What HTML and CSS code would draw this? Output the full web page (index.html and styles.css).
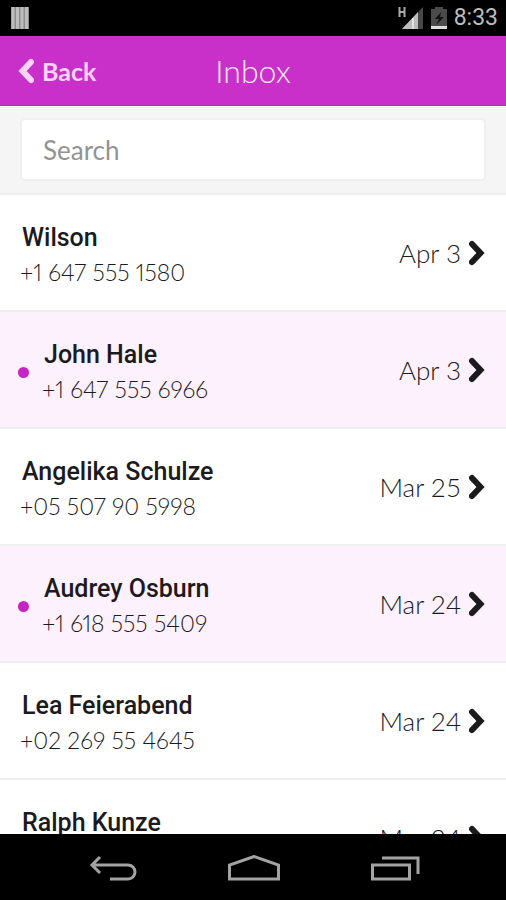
FILE: index.html
```html
<!DOCTYPE html>
<html lang="en">
<head>
<meta charset="utf-8">
<meta name="viewport" content="width=device-width, initial-scale=1">
<title>Inbox</title>
<link rel="stylesheet" href="styles.css">
</head>
<body>
<svg class="symbols" aria-hidden="true">
  <symbol id="chevron" viewBox="0 0 16 26"><path d="M3 4 11.500 13 3 22" fill="none" stroke="currentColor" stroke-width="6" stroke-linecap="round" stroke-linejoin="miter"/></symbol>
</svg>
<div class="screen">
  <div class="status">
    <svg class="status-bars" viewBox="0 0 18 22" aria-hidden="true"><rect width="18" height="22" fill="#8c8c8c"/><path d="M2 0v22M6.500 0v22M11 0v22M15.500 0v22" stroke="#bdbdbd" stroke-width="3"/></svg>
    <div class="status-right">
      <svg class="signal" viewBox="0 0 26 24" aria-hidden="true">
        <path d="M1.500 1v10M6.500 1v10M1.500 6h5" stroke="#aaa" stroke-width="2" fill="none"/>
        <path d="M4 23 25 1v22z" fill="#484848"/><path d="M4 23 20 6v17z" fill="#bdbdbd"/><path d="M15 12v11" stroke="#e2e2e2" stroke-width="2"/>
      </svg>
      <svg class="battery" viewBox="0 0 16 24" aria-hidden="true">
        <path d="M4 1h8v2h4v20H0V3h4z" fill="#4b4b4b"/><path d="M0 20h16v3H0z" fill="#ddd"/><path d="M10 6 4 13h4l-3 6 8-8H9z" fill="#111"/>
      </svg>
      <span class="clock">8:33</span>
    </div>
  </div>
  <header class="bar">
    <button class="back" type="button"><svg class="chevron chevron-left" aria-hidden="true"><use href="#chevron"/></svg>Back</button>
    <h1 class="title">Inbox</h1>
  </header>
  <form class="search"><input class="search-box" type="search" placeholder="Search" aria-label="Search"></form>
  <main class="list-area">
    <ul class="list">
      <li><a class="row" href="#wilson"><span class="who"><span class="name">Wilson</span><span class="number">+1 647 555 1580</span></span><span class="date">Apr 3</span><svg class="chevron" aria-hidden="true"><use href="#chevron"/></svg></a></li>
      <li><a class="row unread" href="#john"><span class="dot"></span><span class="who"><span class="name">John Hale</span><span class="number">+1 647 555 6966</span></span><span class="date">Apr 3</span><svg class="chevron" aria-hidden="true"><use href="#chevron"/></svg></a></li>
      <li><a class="row" href="#angelika"><span class="who"><span class="name">Angelika Schulze</span><span class="number">+05 507 90 5998</span></span><span class="date">Mar 25</span><svg class="chevron" aria-hidden="true"><use href="#chevron"/></svg></a></li>
      <li><a class="row unread" href="#audrey"><span class="dot"></span><span class="who"><span class="name">Audrey Osburn</span><span class="number">+1 618 555 5409</span></span><span class="date">Mar 24</span><svg class="chevron" aria-hidden="true"><use href="#chevron"/></svg></a></li>
      <li><a class="row" href="#lea"><span class="who"><span class="name">Lea Feierabend</span><span class="number">+02 269 55 4645</span></span><span class="date">Mar 24</span><svg class="chevron" aria-hidden="true"><use href="#chevron"/></svg></a></li>
      <li><a class="row" href="#ralph"><span class="who"><span class="name">Ralph Kunze</span><span class="number">&nbsp;</span></span><span class="date">Mar 24</span><svg class="chevron" aria-hidden="true"><use href="#chevron"/></svg></a></li>
    </ul>
  </main>
  <nav class="nav" aria-label="System">
    <button class="nav-button" type="button" aria-label="Back"><svg viewBox="0 0 54 30" aria-hidden="true"><path d="M15 2 7 10l8 8M7 10h36a7 7 0 0 1 0 14H25"/></svg></button>
    <button class="nav-button" type="button" aria-label="Home"><svg viewBox="0 0 54 30" aria-hidden="true"><path d="M3.500 24V10L28 1.500 52.500 10v14z"/></svg></button>
    <button class="nav-button" type="button" aria-label="Recent apps"><svg viewBox="0 0 54 30" aria-hidden="true"><path d="M5.500 10h37v14h-37zM15 3h36v16"/></svg></button>
  </nav>
</div>
</body>
</html>
```
FILE: styles.css
```css
* { box-sizing: border-box; }

body {
  margin: 0;
  font-family: Roboto, "Liberation Sans", sans-serif;
  color: #1c1a1d;
  background: #000;
}

button { border: 0; padding: 0; background: none; font: inherit; }

.symbols { display: none; }

.screen {
  display: flex;
  flex-direction: column;
  height: 100vh;
}

.status {
  display: flex;
  align-items: center;
  justify-content: space-between;
  height: 36px;
  padding: 0 8px 0 11px;
  background: #000;
}

.status-bars { width: 18px; height: 22px; }
.status-right { display: flex; align-items: center; gap: 7px; }
.signal { width: 26px; height: 24px; }
.battery { width: 16px; height: 24px; }
.clock { color: #bdbdbd; font-size: 23px; line-height: 36px; }

.bar {
  display: grid;
  grid-template-columns: 1fr auto 1fr;
  align-items: center;
  height: 70px;
  padding: 0 18px;
  background: #c930c9;
  border-bottom: 1px solid #b62bb8;
}

.back {
  display: flex;
  align-items: center;
  justify-self: start;
  gap: 8px;
  color: #fbd3fb;
  font-family: Lato, sans-serif;
  font-size: 25px;
  font-weight: 700;
}

.title {
  margin: 0;
  color: #fdeafd;
  font-family: Lato, sans-serif;
  font-size: 32px;
  font-weight: 300;
  line-height: 40px;
}

.chevron { width: 16px; height: 26px; flex: none; }
.chevron-left { transform: scaleX(-1); }

.search {
  padding: 12px 20px;
  background: #f5f5f5;
  border-bottom: 2px solid #eee;
}

.search-box {
  display: block;
  width: 100%;
  height: 63px;
  padding: 0 21px;
  border: 2px solid #efefef;
  border-radius: 5px;
  background: #fff;
  appearance: none;
  color: #1c1a1d;
  font-family: Lato, sans-serif;
  font-size: 26px;
}

.search-box::placeholder { color: #939393; opacity: 1; }

.list-area {
  flex: 1;
  min-height: 0;
  overflow: hidden;
  background: #fff;
}

.list { margin: 0; padding: 0; list-style: none; }

.row {
  display: flex;
  align-items: center;
  height: 117px;
  padding: 0 21px 0 20px;
  border-bottom: 2px solid #eee;
  color: inherit;
  text-decoration: none;
}

.unread { padding-left: 18px; background: #fcf1fc; }
.dot { width: 11px; height: 11px; margin: 6px 13px 0 0; border-radius: 50%; background: #c622c6; }
.who { display: flex; flex: 1; flex-direction: column; padding-top: 4px; }

.name {
  padding-left: 2px;
  font-size: 25px;
  font-weight: 500;
  line-height: 34px;
}

.number {
  font-family: Lato, sans-serif;
  font-size: 23px;
  font-variant-numeric: proportional-nums;
  font-weight: 300;
  line-height: 34px;
}

.date {
  margin-right: 8px;
  font-family: Lato, sans-serif;
  font-size: 26px;
  font-weight: 300;
  line-height: 34px;
}

.nav {
  display: flex;
  height: 66px;
  padding: 6px 42px 0;
  background: #000;
}

.nav-button {
  display: flex;
  flex: 1;
  align-items: center;
  justify-content: center;
}

.nav-button svg {
  width: 54px;
  height: 30px;
  fill: none;
  stroke: #a3a3a3;
  stroke-width: 3;
}
```
